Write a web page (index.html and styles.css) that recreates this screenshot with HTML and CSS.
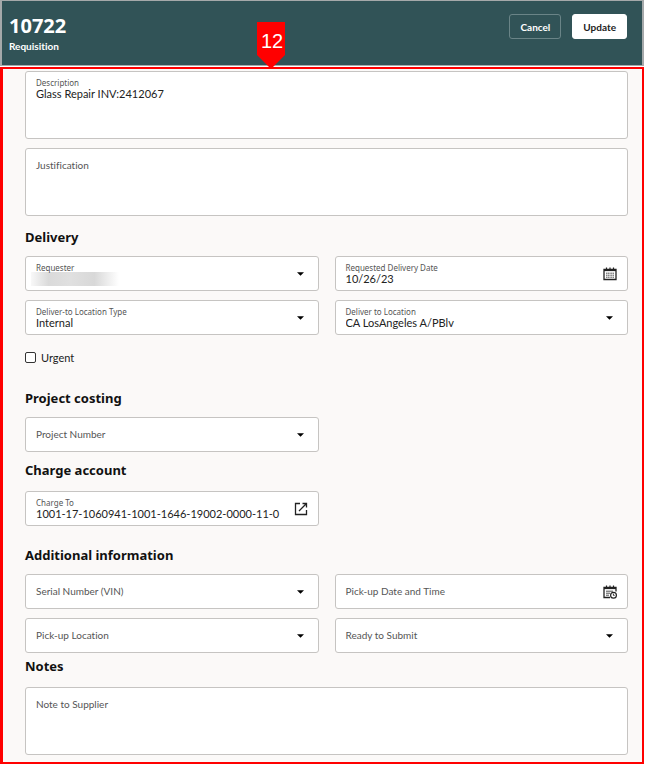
FILE: index.html
```
<!DOCTYPE html>
<html lang="en">
<head>
    <meta charset="UTF-8">
    <meta name="viewport" content="width=device-width, initial-scale=1.0">
    <title>Requisition 10722</title>
    <link rel="stylesheet" href="styles.css">
</head>
<body>

<header class="page-header">
    <div class="page-title">
        <h1>10722</h1>
        <p>Requisition</p>
    </div>
    <div class="header-actions">
        <button type="button" class="btn btn-outline">Cancel</button>
        <button type="submit" form="requisition-form" class="btn btn-solid">Update</button>
    </div>
    <span class="callout">12</span>
</header>

<main class="panel">
    <form id="requisition-form">
        <section class="section stack">
            <div class="field field-tall has-value">
                <label for="description">Description</label>
                <textarea id="description">Glass Repair INV:2412067</textarea>
            </div>
            <div class="field field-tall">
                <label for="justification">Justification</label>
                <textarea id="justification"></textarea>
            </div>
        </section>

        <section class="section section-delivery">
            <h2>Delivery</h2>
            <div class="field-grid">
                <div class="field has-value">
                    <label for="requester">Requester</label>
                    <select id="requester"><option></option></select>
                    <span class="redacted"></span>
                    <svg class="caret" viewBox="0 0 8 4"><path d="M0 0h8L4 4z"/></svg>
                </div>
                <div class="field has-value">
                    <label for="delivery-date">Requested Delivery Date</label>
                    <input type="text" id="delivery-date" value="10/26/23">
                    <button type="button" class="icon-btn" aria-label="Select date">
                        <svg viewBox="0 0 14 14" fill="none" stroke="#222">
                            <path d="M1 2.5h12v10H1z" stroke-width="1.3"/>
                            <path d="M1 3.5h12" stroke-width="1.2"/>
                            <path d="M3.5 0.5v3M7 0.5v3M10.5 0.5v3" stroke-width="1.2"/>
                            <path d="M3 6.2h8M3 8.2h8M3 10.2h8" stroke-dasharray="1.3 0.4" stroke-width="0.8"/>
                        </svg>
                    </button>
                </div>
                <div class="field has-value">
                    <label for="location-type">Deliver-to Location Type</label>
                    <select id="location-type"><option>Internal</option></select>
                    <svg class="caret" viewBox="0 0 8 4"><path d="M0 0h8L4 4z"/></svg>
                </div>
                <div class="field has-value">
                    <label for="location">Deliver to Location</label>
                    <select id="location"><option>CA LosAngeles A/PBlv</option></select>
                    <svg class="caret" viewBox="0 0 8 4"><path d="M0 0h8L4 4z"/></svg>
                </div>
            </div>
            <div class="check-row">
                <input type="checkbox" id="urgent">
                <label for="urgent">Urgent</label>
            </div>
        </section>

        <section class="section section-project">
            <h2>Project costing</h2>
            <div class="field-grid">
                <div class="field">
                    <label for="project-number">Project Number</label>
                    <select id="project-number"><option></option></select>
                    <svg class="caret" viewBox="0 0 8 4"><path d="M0 0h8L4 4z"/></svg>
                </div>
            </div>
        </section>

        <section class="section section-charge">
            <h2>Charge account</h2>
            <div class="field-grid">
                <div class="field has-value">
                    <label for="charge-to">Charge To</label>
                    <input type="text" id="charge-to" value="1001-17-1060941-1001-1646-19002-0000-11-0">
                    <button type="button" class="icon-btn" aria-label="Open charge account">
                        <svg viewBox="0 0 14 14" fill="none" stroke="#222" stroke-width="1.3">
                            <path d="M6 1.5H1.5v11h11V8"/>
                            <path d="M8.5 1.5h4v4M12.5 1.5L5 9"/>
                        </svg>
                    </button>
                </div>
            </div>
        </section>

        <section class="section section-additional">
            <h2>Additional information</h2>
            <div class="field-grid">
                <div class="field">
                    <label for="serial">Serial Number (VIN)</label>
                    <select id="serial"><option></option></select>
                    <svg class="caret" viewBox="0 0 8 4"><path d="M0 0h8L4 4z"/></svg>
                </div>
                <div class="field">
                    <label for="pickup-date">Pick-up Date and Time</label>
                    <input type="text" id="pickup-date">
                    <button type="button" class="icon-btn" aria-label="Select date and time">
                        <svg viewBox="0 0 14 14" fill="none" stroke="#222">
                            <path d="M7 12.5H1v-10h12v4" stroke-width="1.3"/>
                            <path d="M1 3.5h12" stroke-width="1.2"/>
                            <path d="M3.5 0.5v3M7 0.5v3M10.5 0.5v3" stroke-width="1.2"/>
                            <path d="M3 6.2h7M3 8.2h4M3 10.2h3" stroke-width="0.8"/>
                            <circle cx="10.5" cy="10.2" r="2.9" stroke-width="1.2"/>
                            <path d="M10.4 8.6v1.8h1.2" stroke-width="0.9"/>
                        </svg>
                    </button>
                </div>
                <div class="field">
                    <label for="pickup-location">Pick-up Location</label>
                    <select id="pickup-location"><option></option></select>
                    <svg class="caret" viewBox="0 0 8 4"><path d="M0 0h8L4 4z"/></svg>
                </div>
                <div class="field">
                    <label for="ready">Ready to Submit</label>
                    <select id="ready"><option></option></select>
                    <svg class="caret" viewBox="0 0 8 4"><path d="M0 0h8L4 4z"/></svg>
                </div>
            </div>
        </section>

        <section class="section section-notes">
            <h2>Notes</h2>
            <div class="field field-tall">
                <label for="note">Note to Supplier</label>
                <textarea id="note"></textarea>
            </div>
        </section>
    </form>
</main>

</body>
</html>
```
FILE: styles.css
```
* {
    box-sizing: border-box;
}

body {
    margin: 0;
    padding-right: 3px;
    font-family: Lato, 'Noto Sans', sans-serif;
    font-size: 11px;
    font-variant-ligatures: none;
    color: #222;
    background-color: #fff;
}

h1, h2, p {
    margin: 0;
}

h1, h2 {
    font-family: 'Noto Sans', sans-serif;
}

/* Header */
.page-header {
    position: relative;
    display: flex;
    justify-content: space-between;
    align-items: flex-start;
    padding: 13px 15px 11px 7px;
    border: 1px solid #a5a9aa;
    border-width: 1px 2px 1px 2px;
    background-color: #315357;
    color: #fff;
}

.page-title h1 {
    font-size: 20px;
    line-height: 24px;
}

.page-title p {
    font-size: 10px;
    font-weight: 700;
    line-height: 16px;
}

.header-actions {
    display: flex;
    gap: 11px;
}

.btn {
    height: 25px;
    padding: 0 10px;
    border: 1px solid #fff;
    border-radius: 3px;
    font-family: inherit;
    font-size: 10px;
    font-weight: 700;
    cursor: pointer;
}

.btn-outline {
    border-color: #6a8487;
    background-color: transparent;
    color: #fff;
}

.btn-solid {
    background-color: #fff;
    color: #222;
}

.callout {
    position: absolute;
    z-index: 1;
    top: 21px;
    left: 255px;
    width: 28px;
    height: 47px;
    padding-left: 2px;
    background-color: #f00;
    clip-path: polygon(0 0, 100% 0, 100% 70%, 50% 100%, 0 70%);
    font-family: 'Liberation Sans', sans-serif;
    font-size: 20px;
    line-height: 39px;
    text-align: center;
}

/* Form panel */
.panel {
    margin-top: 1px;
    padding: 2px 14px 7px 22px;
    border: 2px solid #f00;
    border-left-width: 3px;
    background-color: #fbf9f8;
}

.stack {
    display: grid;
    gap: 9px;
}

.section h2 {
    margin-bottom: 9px;
    font-size: 13px;
    line-height: 20px;
    color: #111;
}

.section-delivery {
    margin-top: 11px;
}

.section-project {
    margin-top: 24px;
}

.section-charge {
    margin-top: 8px;
}

.section-additional {
    margin-top: 19px;
}

.section-notes {
    margin-top: 3px;
}

.section-charge h2,
.section-notes h2 {
    margin-bottom: 11px;
}

.field-grid {
    display: grid;
    grid-template-columns: 1fr 1fr;
    gap: 9px 16px;
}

/* Label, control and icon share one grid cell */
.field {
    display: grid;
    height: 35px;
    border: 1px solid #c6c4c2;
    border-radius: 3px;
    background-color: #fff;
}

.field-tall {
    height: 68px;
}

.field > * {
    grid-area: 1 / 1;
    min-width: 0;
}

.field label {
    z-index: 1;
    align-self: start;
    justify-self: start;
    padding-left: 10px;
    font-size: 10px;
    line-height: 33px;
    color: #555;
    pointer-events: none;
}

.field.has-value label {
    padding-top: 5px;
    font-family: 'Noto Sans', sans-serif;
    font-size: 8px;
    line-height: 12px;
}

.field input,
.field select,
.field textarea {
    width: 100%;
    height: 100%;
    margin: 0;
    padding: 10px 30px 0 10px;
    border: none;
    border-radius: 3px;
    background: none;
    font-family: inherit;
    font-size: 11px;
    line-height: 16px;
    color: #222;
    appearance: none;
    resize: none;
}

.field textarea {
    padding-top: 14px;
}

.caret {
    align-self: center;
    justify-self: end;
    width: 7px;
    height: 4px;
    margin-right: 14px;
    pointer-events: none;
}

.icon-btn {
    z-index: 1;
    align-self: center;
    justify-self: end;
    width: 14px;
    height: 14px;
    margin-right: 10px;
    padding: 0;
    border: none;
    background: none;
    cursor: pointer;
}

.icon-btn svg {
    display: block;
}

.redacted {
    align-self: end;
    justify-self: start;
    width: 88px;
    height: 14px;
    margin: 0 0 4px 5px;
    background: linear-gradient(to right, #f8f8f8, #dadada 20%, #e0e0e0 45%, #d8d8d8 72%, #fff);
}

.check-row {
    display: flex;
    align-items: center;
    gap: 5px;
    margin-top: 15px;
    height: 14px;
}

.check-row input {
    width: 11px;
    height: 11px;
    margin: 0;
    border: 1px solid #333;
    border-radius: 2px;
    background-color: #fff;
    appearance: none;
}

.check-row input:checked {
    background-color: #315357;
}
```
